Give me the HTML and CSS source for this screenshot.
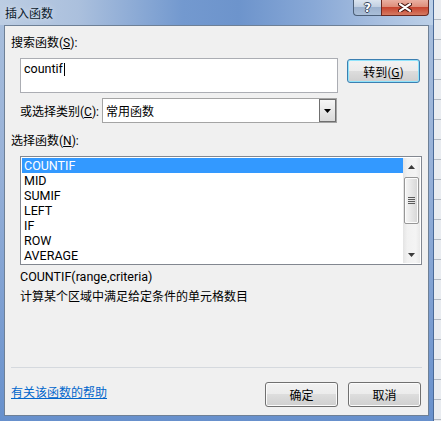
FILE: index.html
```html
<!DOCTYPE html>
<html lang="zh-CN">
<head>
<meta charset="utf-8">
<title>插入函数</title>
<link rel="stylesheet" href="styles.css">
</head>
<body>
<div class="desk">
  <div class="win">
    <div class="titlebar">
      <span class="title">插入函数</span>
      <div class="caps">
        <div class="cap help"><span class="help-glyph">?</span></div>
        <div class="cap close">
          <svg width="14" height="9" viewBox="0 0 14 9" aria-hidden="true">
            <path d="M2 1.2 L12 7.8 M12 1.2 L2 7.8" stroke="#4a1710" stroke-width="4.2" stroke-linecap="round"/>
            <path d="M2 1.2 L12 7.8 M12 1.2 L2 7.8" stroke="#ffffff" stroke-width="2.2" stroke-linecap="round"/>
          </svg>
        </div>
      </div>
    </div>
    <div class="client">
      <div class="lbl">搜索函数(<u>S</u>):</div>
      <div class="search-row">
        <div class="search"><span class="latin">countif</span><span class="caret"></span></div>
        <div class="btn btn-default">转到(<u>G</u>)</div>
      </div>
      <div class="cat-row">
        <span class="cat-lbl">或选择类别(<u>C</u>):</span>
        <div class="select">
          <span class="select-val">常用函数</span>
          <span class="select-arrow">
            <svg width="7" height="4" viewBox="0 0 7 4" aria-hidden="true"><polygon points="0,0 7,0 3.5,4" fill="#000"/></svg>
          </span>
        </div>
      </div>
      <div class="lbl lbl-list">选择函数(<u>N</u>):</div>
      <div class="listbox">
        <ul class="items">
          <li class="sel">COUNTIF</li>
          <li>MID</li>
          <li>SUMIF</li>
          <li>LEFT</li>
          <li>IF</li>
          <li>ROW</li>
          <li>AVERAGE</li>
        </ul>
        <div class="vscroll">
          <div class="sb-arrow">
            <svg width="7" height="4" viewBox="0 0 7 4" aria-hidden="true"><polygon points="0,4 7,4 3.5,0" fill="#3c3c3c"/></svg>
          </div>
          <div class="sb-track">
            <div class="thumb">
              <svg width="7" height="8" viewBox="0 0 7 8" aria-hidden="true">
                <path d="M0 0.5H7M0 2.5H7M0 4.5H7M0 6.5H7" stroke="#5a5a5a" stroke-width="1"/>
              </svg>
            </div>
          </div>
          <div class="sb-arrow">
            <svg width="7" height="4" viewBox="0 0 7 4" aria-hidden="true"><polygon points="0,0 7,0 3.5,4" fill="#3c3c3c"/></svg>
          </div>
        </div>
      </div>
      <div class="sig latin">COUNTIF(range,criteria)</div>
      <div class="desc">计算某个区域中满足给定条件的单元格数目</div>
      <div class="footer">
        <div class="sep"></div>
        <div class="foot-row">
          <a class="help-link" href="#">有关该函数的帮助</a>
          <div class="btns">
            <div class="btn">确定</div>
            <div class="btn">取消</div>
          </div>
        </div>
      </div>
    </div>
  </div>
  <div class="sheet"></div>
</div>
</body>
</html>
```
FILE: styles.css
```css
body {
  margin: 0;
  font-family: Roboto, "Noto Sans CJK SC", sans-serif;
  font-size: 12px;
  color: #000;
}

.latin {
  font-size: 12.5px;
}

.desk {
  display: flex;
  width: 441px;
  height: 421px;
  overflow: hidden;
}

.win {
  width: 434px;
  height: 421px;
  box-sizing: border-box;
  padding: 0 5px 5px 4px;
  display: flex;
  flex-direction: column;
  background:
    linear-gradient(to right, #bccde3 0%, #abc0dd 18%, #7399cf 42%, #6d94cc 55%, #88a8d6 72%, #a9c0e0 88%, #bcd0e8 100%) top / 100% 25px no-repeat,
    linear-gradient(to bottom, #aac0dd 0%, #97b1d8 40%, #6790cc 100%);
  box-shadow: inset -1px 0 0 #4a6a98;
}

.titlebar {
  height: 25px;
  display: flex;
  justify-content: space-between;
  align-items: flex-start;
  padding-left: 1px;
}

.title {
  line-height: 25px;
  font-family: "Noto Sans CJK SC", sans-serif;
  color: #0c1a2c;
  text-shadow: 0 0 6px rgba(255, 255, 255, 0.6);
}

.caps {
  display: flex;
}

.cap {
  height: 16px;
  box-sizing: border-box;
  display: flex;
  align-items: center;
  justify-content: center;
}

.help {
  width: 28px;
  border: 1px solid #4c5f78;
  border-top: none;
  border-right: none;
  border-radius: 0 0 0 4px;
  background: linear-gradient(#dbe4ef 0%, #c2d0e2 45%, #9db2ce 50%, #aabed8 100%);
}

.help-glyph {
  font-family: "DejaVu Sans", sans-serif;
  font-weight: bold;
  font-size: 12px;
  line-height: 14px;
  color: #fff;
  text-shadow: 1px 0 0 #35475f, -1px 0 0 #35475f, 0 1px 0 #35475f, 0 -1px 0 #35475f;
}

.close {
  width: 48px;
  border: 1px solid #6b2a22;
  border-top: none;
  border-radius: 0 0 4px 0;
  background: linear-gradient(#eab0a2 0%, #de8e7b 45%, #c74530 50%, #d57a62 100%);
}

.client {
  height: 391px;
  box-sizing: border-box;
  border: 1px solid #6e8096;
  background: #f0f0f0;
  padding: 9px 6px 8px 6px;
  display: flex;
  flex-direction: column;
}

.lbl {
  line-height: 16px;
  height: 16px;
}

.search-row {
  display: flex;
  align-items: flex-start;
  gap: 9px;
  margin-top: 7px;
  padding-left: 9px;
}

.search {
  width: 318px;
  height: 35px;
  box-sizing: border-box;
  border: 1px solid #abadb3;
  background: #fff;
  padding: 2px 3px;
  line-height: 16px;
}

.caret {
  display: inline-block;
  width: 1px;
  height: 13px;
  background: #000;
  vertical-align: -3px;
  margin-left: 1px;
}

.btn {
  width: 73px;
  height: 25px;
  box-sizing: border-box;
  border: 1px solid #707070;
  border-radius: 3px;
  background: linear-gradient(#f2f2f2 0%, #ebebeb 50%, #dddddd 50%, #cfcfcf 100%);
  box-shadow: inset 0 0 0 1px #fbfbfb;
  display: flex;
  align-items: center;
  justify-content: center;
  font-family: "Noto Sans CJK SC", sans-serif;
}

.btn-default {
  height: 24px;
  margin-top: 1px;
  border-color: #3c7fb1;
  box-shadow: inset 0 0 0 1px #8fe3fb;
}

.cat-row {
  display: flex;
  align-items: center;
  margin-top: 5px;
  padding-left: 9px;
}

.cat-lbl {
  width: 82px;
}

.select {
  width: 235px;
  height: 25px;
  box-sizing: border-box;
  border: 1px solid #a4a4a4;
  background: #fff;
  display: flex;
  align-items: center;
  justify-content: space-between;
  padding: 0 0 0 3px;
}

.select-arrow {
  width: 17px;
  height: 23px;
  box-sizing: border-box;
  border: 1px solid #6f6f6f;
  background: linear-gradient(#f6f6f6, #dadada);
  display: flex;
  align-items: center;
  justify-content: center;
}

.lbl-list {
  margin-top: 10px;
}

.listbox {
  margin: 7px 0 0 9px;
  width: 402px;
  height: 109px;
  box-sizing: border-box;
  border: 1px solid #828790;
  background: #fff;
  padding: 1px;
  display: flex;
}

.items {
  list-style: none;
  margin: 0;
  padding: 0;
  flex: 1;
  font-size: 12.5px;
}

.items li {
  height: 15px;
  line-height: 15px;
  padding-left: 2px;
}

.items li.sel {
  background: #3399ff;
  color: #fff;
}

.vscroll {
  width: 17px;
  display: flex;
  flex-direction: column;
  background: linear-gradient(to right, #e4e4e4, #f1f1f1 25%, #f4f4f4 75%, #e9e9e9);
}

.sb-arrow {
  height: 17px;
  display: flex;
  align-items: center;
  justify-content: center;
}

.sb-track {
  flex: 1;
  padding: 2px 1px 0 1px;
}

.thumb {
  height: 47px;
  box-sizing: border-box;
  border: 1px solid #979797;
  border-radius: 2px;
  background: linear-gradient(to right, #f6f6f6, #e6e6e6 50%, #d6d6d6);
  box-shadow: inset 0 0 0 1px #fcfcfc;
  display: flex;
  align-items: center;
  justify-content: center;
}

.sig {
  margin: 4px 0 0 9px;
  line-height: 16px;
}

.desc {
  margin: 4px 0 0 9px;
  line-height: 16px;
}

.footer {
  margin-top: auto;
}

.sep {
  height: 1px;
  background: #d5d9de;
}

.foot-row {
  display: flex;
  justify-content: space-between;
  align-items: flex-start;
  margin-top: 14px;
}

.help-link {
  margin-top: 3px;
  line-height: 16px;
  color: #0066cc;
  text-decoration: underline;
}

.btns {
  display: flex;
  gap: 10px;
  margin-right: 1px;
}

.sheet {
  flex: 1;
  background: repeating-linear-gradient(to bottom, #e9ecf0 0, #e9ecf0 19px, #b3b9c2 19px, #b3b9c2 20px);
}
```
